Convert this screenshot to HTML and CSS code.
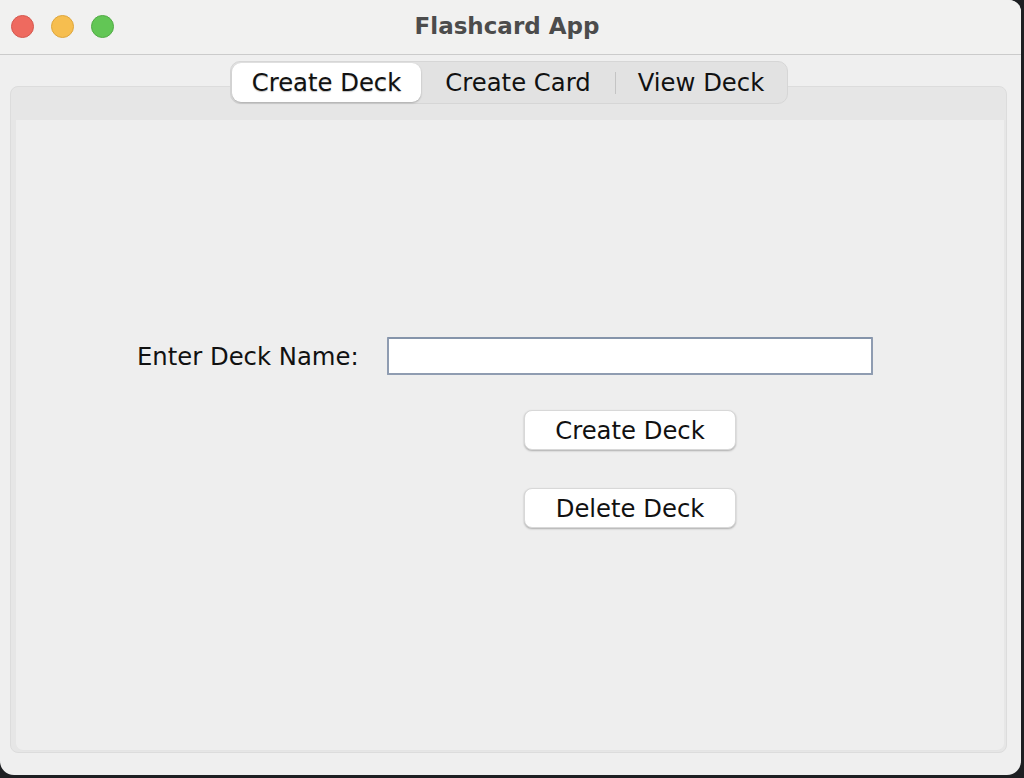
FILE: index.html
```html
<!DOCTYPE html>
<html>
<head>
<meta charset="utf-8">
<link rel="stylesheet" href="styles.css">
</head>
<body>
<div class="window">
  <div class="titlebar">
    <div class="lights">
      <span class="light red"></span>
      <span class="light yellow"></span>
      <span class="light green"></span>
    </div>
    <div class="title">Flashcard App</div>
  </div>
  <div class="content">
    <div class="tabs">
      <div class="tab selected">Create Deck</div>
      <div class="tab">Create Card</div>
      <div class="sep"></div>
      <div class="tab">View Deck</div>
    </div>
    <div class="panel">
      <div class="inner">
        <div class="form">
          <label class="label">Enter Deck Name:</label>
          <input class="field" type="text">
          <div class="buttons">
            <button class="btn">Create Deck</button>
            <button class="btn">Delete Deck</button>
          </div>
        </div>
      </div>
    </div>
  </div>
</div>
</body>
</html>
```

FILE: styles.css
```css
html, body {
  margin: 0;
  padding: 0;
}
body {
  width: 1024px;
  height: 778px;
  background: #1d1f22;
  overflow: hidden;
  font-family: "DejaVu Sans", "Noto Sans", sans-serif;
}
.window {
  width: 1021px;
  height: 775px;
  background: #efefef;
  border-radius: 0 12px 14px 14px;
  overflow: hidden;
  display: flex;
  flex-direction: column;
}
.titlebar {
  height: 54px;
  flex: none;
  background: #f1f1f0;
  border-bottom: 1px solid #cbcbcb;
  display: flex;
  align-items: center;
  position: relative;
}
.lights {
  display: flex;
  gap: 17px;
  padding-left: 11px;
  padding-bottom: 2px;
}
.light {
  width: 23px;
  height: 23px;
  border-radius: 50%;
  box-sizing: border-box;
}
.red { background: #ee6a5f; border: 1px solid #d5584e; }
.yellow { background: #f6be4f; border: 1px solid #dea63c; }
.green { background: #62c655; border: 1px solid #51ab45; }
.title {
  position: absolute;
  left: 0;
  right: 0;
  top: 0;
  bottom: 2px;
  display: flex;
  align-items: center;
  justify-content: center;
  font-weight: bold;
  font-size: 23px;
  color: #4c4c4c;
  padding-right: 7px;
  pointer-events: none;
}
.content {
  flex: 1;
  display: flex;
  flex-direction: column;
  padding: 6px 14px 22px 10px;
}
.tabs {
  position: relative;
  z-index: 1;
  align-self: flex-start;
  margin-left: 220px;
  height: 43px;
  box-sizing: border-box;
  width: 558px;
  display: flex;
  align-items: center;
  background: #e2e2e2;
  border: 1px solid #d6d6d6;
  border-radius: 10px;
  padding: 0 1px;
}
.tab {
  height: 39px;
  display: flex;
  align-items: center;
  justify-content: center;
  font-size: 24.3px;
  color: #111;
  box-sizing: border-box;
}
.tab.selected {
  width: 189px;
  background: #fff;
  border-radius: 9px;
  box-shadow: 0 1px 2px rgba(0,0,0,0.25);
  text-shadow: 0 1px 1px rgba(0,0,0,0.25);
}
.tab:nth-child(2) {
  width: 194px;
}
.tab:nth-child(4) {
  flex: 1;
}
.sep {
  width: 1px;
  height: 22px;
  background: #c4c4c4;
}
.panel {
  flex: 1;
  margin-top: -18px;
  background: #e6e6e6;
  border: 1px solid #dcdcdc;
  border-radius: 8px;
  padding: 33px 2px 1px 5px;
  display: flex;
}
.inner {
  flex: 1;
  background: #eeeeee;
  border-bottom: 1px solid #e4e4e4;
  border-radius: 0 0 7px 7px;
}
.form {
  display: grid;
  grid-template-columns: 250px 486px;
  margin: 217px 0 0 121px;
}
.label {
  display: flex;
  align-items: center;
  font-size: 24.3px;
  color: #111;
  padding-top: 1px;
}
.field {
  height: 38px;
  margin: 0;
  box-sizing: border-box;
  border: 2px solid #8f9cb1;
  border-top-color: #8594aa;
  background: #fff;
  border-radius: 1px;
  outline: none;
}
.buttons {
  grid-column: 2;
  display: flex;
  flex-direction: column;
  align-items: center;
  gap: 38px;
  padding-top: 35px;
}
.btn {
  width: 212px;
  height: 40px;
  margin: 0;
  background: #fff;
  border: 1px solid #d8d8d8;
  border-radius: 8px;
  box-shadow: 0 1px 2px rgba(0,0,0,0.28);
  font-family: "DejaVu Sans", "Noto Sans", sans-serif;
  font-size: 24.3px;
  color: #111;
  padding: 0;
}
```
